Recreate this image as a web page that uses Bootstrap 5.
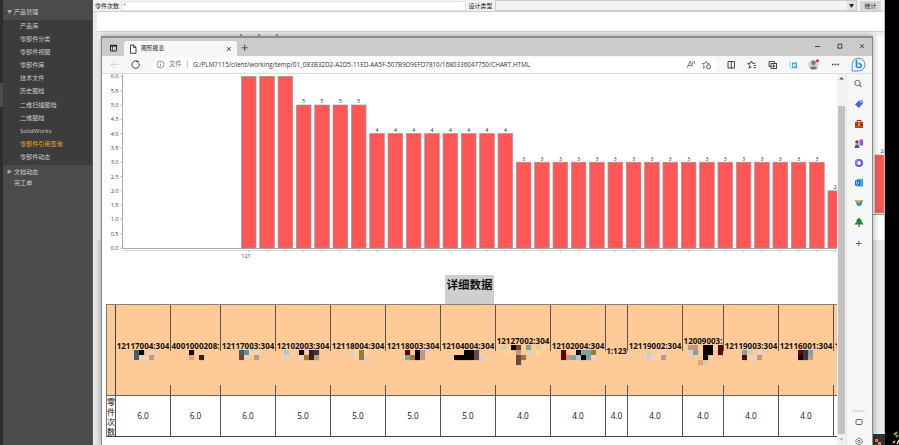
<!DOCTYPE html>
<html>
<head>
<meta charset="utf-8">
<title>图形报表</title>
<link href="https://cdn.jsdelivr.net/npm/bootstrap@5.3.0/dist/css/bootstrap.min.css" rel="stylesheet">
<style>
html,body{width:899px;height:445px;overflow:hidden}
body{font-family:"Open Sans","Noto Sans CJK SC",sans-serif;font-size:6.5px;line-height:1;background:#000;color:#333}
.desktop{width:899px;height:445px}
.rail{width:3px;background:#2d2d2d;padding-top:83px}
.rail-tab{height:24px;background:#4d4d4d}
.side{width:90px;background:#4b4b4b;color:#c8c8c8;border-right:1px solid #555;font-size:6.1px}
.side-head{height:19.5px;padding:4px 0 0 4px}
.side-sub{background:#3c3c3c;height:145.5px}
.side-item{height:13.1px;padding-left:17px}
.side-item.on{color:#e9a227}
.side-item.top-item{padding-left:4px}
.side-item.low-item{padding:0 0 3px 4px}
.tri{width:7px;color:#aaa;font-size:5px}
.app{width:792px;background:#ebebeb}
.tools{height:12px;background:#f2f2f2;border-bottom:1px solid #ccc;color:#222;font-size:6px}
.t-lab{width:28px;padding-left:2px}
.t-in{width:345px;height:10px;padding-left:1px;background:#fff;border:1px solid #e2e2e2;color:#b87a2d}
.t-typ{width:29px}
.t-sel{width:362px;height:11px;background:#f3f3f3;border:1px solid #ccc}
.t-arr{width:9px;background:#e2e2e2;font-size:5px}
.t-btn{width:21px;height:10px;background:#d8d8d8}
.pane{height:228px;margin-left:4px;background:linear-gradient(#fff 0 19px,#d5d5d5 19px 20px,#f1f1f1 20px 24px,#fff 24px)}
.win{left:101px;top:36px;width:772px;height:409px;background:#f7f7f7;border:solid #8b8b8b;border-width:2px 1px 0 1px;box-shadow:0 0 7px rgba(0,0,0,.4);overflow:hidden}
.tabs{height:18px;background:#cbcbcb}
.tab1{width:113px;height:15px;background:#f7f7f7;margin-top:3px;border-radius:3px 3px 0 0;font-size:5.8px;color:#222}
.ctl{margin-right:3px}
.addr{height:18px;border-bottom:1px solid #dedede}
.pill{width:567px;height:15px;border-radius:8px;background:#fff;font-size:6.35px;color:#333;margin-left:9px}
.bar-s{width:11px;text-align:center}
.page{width:735px;background:#fff;overflow:hidden}
.bar-v{width:9px;background:#f1f1f1}
.thumb{width:7px;height:328px;background:#c2c2c2}
.edge{width:26px;border-left:1px solid #e7e7e7}
.ttl{width:49px;height:29px;background:#cfcfcf;color:#111;font-weight:700;font-size:11.5px;margin-left:343px;padding:4px 0 0 1.5px;white-space:nowrap}
.grid-t{margin-left:4px;width:760px;color:#111;border-top:1px solid #8d8075;border-left:1px solid #777}
.hcell{height:91px;flex:none;border-bottom:1px solid #6e6258;font-weight:700;font-size:8px;
 background:linear-gradient(#5c544d 0 46px,transparent 46px 80px,#5c544d 80px) right/1px 100% no-repeat #feca98;white-space:nowrap}
.hcell.first{background:linear-gradient(#444,#444) right/1px 100% no-repeat #feca98}
.hname{margin-left:-1px}
.vcell{height:41px;flex:none;border-right:1px solid #555;border-bottom:1px solid #444;font-size:8.2px;background:#fff}
.vcell.first{font-size:8.2px;line-height:10px;font-family:"Noto Sans CJK SC",sans-serif}
.vcell.first span{height:10px}
svg{display:block;flex:none}
.spark{left:872px;top:0}
.back-labels{left:238px;top:34px}
</style>
<script src="https://cdn.jsdelivr.net/npm/bootstrap@5.3.0/dist/js/bootstrap.bundle.min.js"></script>
</head>
<body>
<div class="desktop d-flex position-relative overflow-hidden">
  <div class="rail flex-shrink-0"><div class="rail-tab"></div></div>
  <nav class="side flex-shrink-0">
    <div class="side-head d-flex align-items-center"><span class="tri">▼</span>产品管理</div>
    <div class="side-sub">
      <div class="side-item d-flex align-items-center">产品库</div>
      <div class="side-item d-flex align-items-center">零部件分类</div>
      <div class="side-item d-flex align-items-center">零部件视图</div>
      <div class="side-item d-flex align-items-center">零部件库</div>
      <div class="side-item d-flex align-items-center">技术文件</div>
      <div class="side-item d-flex align-items-center">历史图档</div>
      <div class="side-item d-flex align-items-center">二维扫描图档</div>
      <div class="side-item d-flex align-items-center">二维图档</div>
      <div class="side-item d-flex align-items-center">SolidWorks</div>
      <div class="side-item on d-flex align-items-center">零部件引用查询</div>
      <div class="side-item d-flex align-items-center">零部件动态</div>
    </div>
    <div class="side-item top-item d-flex align-items-center"><span class="tri">▶</span>文档动态</div>
    <div class="side-item low-item d-flex align-items-center"><span class="tri"></span>完工单</div>
  </nav>
  <main class="app flex-shrink-0">
    <div class="tools d-flex align-items-center">
      <span class="t-lab text-nowrap flex-shrink-0">零件次数</span>
      <div class="t-in">*</div>
      <span class="t-typ text-nowrap text-center flex-shrink-0">设计类型</span>
      <div class="t-sel d-flex justify-content-end"><span class="t-arr d-flex align-items-center justify-content-center">▼</span></div>
      <div class="t-btn ms-auto me-1 d-flex align-items-center justify-content-center">统计</div>
    </div>
    <div class="pane"></div>
  </main>
  <svg class="position-absolute spark" width="27" height="445">
    <rect x="3" y="155" width="9" height="58" fill="#ff5555" stroke="#999" stroke-width=".6"/>
    <text x="8.5" y="153" font-size="6" fill="#333">2</text>
    <path d="M0 214.5H12" stroke="#999"/>
    <rect x="12" width="1" height="434" fill="#bbb"/><rect x="13" width="14" height="445" fill="#000"/>
    <rect y="434" width="13" height="11" fill="#333"/>
    <path d="M3 439h3v3h-3zM6 442h3v3h-3z" fill="#ee7b5d"/>
    <path d="M22 435l3-3M24 437l2-2" stroke="#8cab32" stroke-width="2"/><path d="M21 443l2-2M25 444l2-4" stroke="#d9d9b0" stroke-width="1.5"/>
  </svg>
  <svg class="position-absolute back-labels" width="42" height="2"><path d="M2 1h2M20 1h2M38 1h2" stroke="#444"/></svg>

  <section class="win position-absolute d-flex flex-column">
    <div class="tabs d-flex flex-shrink-0">
      <svg width="22" height="18" fill="none" stroke="#222" stroke-width="1"><rect x="8.500" y="7.500" width="6" height="5.500" rx=".5"/><path d="M8 7.700h7" stroke-width="1.700"/><path d="M10.500 8v5" stroke-width=".7"/></svg>
      <div class="tab1 d-flex align-items-center">
        <svg width="17" height="12" fill="none" stroke="#333" stroke-width=".9"><path d="M6.500 2h3.200l2.300 2.300v6h-5.500zM9.600 2v2.500h2.400"/></svg>图形报表
        <svg class="ms-auto me-1" width="8" height="8" stroke="#333" stroke-width=".9"><path d="M1.800 2l4 4M5.800 2l-4 4"/></svg>
      </div>
      <svg width="14" height="18" stroke="#444" stroke-width=".9"><path d="M4.500 9.800h6.400M7.700 6.600v6.400"/></svg>
      <svg class="ctl ms-auto" width="66" height="18" fill="none" stroke="#333" stroke-width=".9"><path d="M12 8.500h5M35 6.200v4h3.800v-4.200zM57 6.200l4 4M61 6.200l-4 4"/></svg>
    </div>
    <div class="addr d-flex align-items-center flex-shrink-0">
      <svg width="40" height="17" fill="none"><path d="M9 8.500h8M12.500 5l-3.500 3.500 3.500 3.500" stroke="#cfcfcf" stroke-width=".9"/><path d="M35.300 5.300a3.700 3.700 0 1 0 1.900 2.200M33.800 5.200h2.600M36 5v2.200" stroke="#333" stroke-width=".9"/></svg>
      <div class="pill d-flex align-items-center">
        <svg width="18" height="15" fill="none" stroke="#666" stroke-width=".7"><circle cx="9.500" cy="7.500" r="3.500"/><path d="M9.500 7v2.400M9.500 5.300v.8"/></svg>
        <span class="text-secondary">文件</span><span class="text-secondary bar-s">|</span>
        <svg width="342" height="15"><text x="0" y="9.800" font-size="6.500" fill="#333" textLength="337" lengthAdjust="spacingAndGlyphs">G:/PLM7115/client/working/temp/01_083B32D2-A2D5-11ED-AA5F-507B9D9EFD7810/1680336047750/CHART.HTML</text></svg>
        <svg class="ms-auto me-1" width="34" height="15" fill="none" stroke="#666" stroke-width=".8"><path d="M7 11l3-7 2.500 6M8 8.500h3.500M12 4q1.500 1.500 .5 3.500M14 4q1 1.500 .3 3"/><path d="M26 4l-1.200 2.500h-2.800l2 2-.6 2.800 2-1.300M26 4l1.200 2.500h2.500"/><circle cx="28.500" cy="9.700" r="2" stroke="#333"/></svg>
      </div>
      <svg width="154" height="18" fill="none" stroke="#333" stroke-width=".9"><path d="M10 5.500h6.500v6.500h-6.500zM13.250 5v7.500"/><path d="M33.500 5l-1.200 2.400h-2.600l1.900 2-.5 2.700 2.400-1.300M33.500 5l1.200 2.400h2.600M35.500 9.500h2.500M35.500 11.700h2.500"/><path d="M53 10.500h-2v-5h5.500v2"/><rect x="53" y="7.500" width="5.500" height="5"/><path d="M55.700 8.300v3.400M54 10h3.400"/><path d="M72.200 5v7h7" stroke="#98cfe8"/><rect x="74" y="6.500" width="5" height="5.500" fill="#20b5e5" stroke="none"/><path d="M75 9.400h2.800a1.400 1.400 0 1 0-.7 1.300" stroke="#fff" stroke-width=".8"/><circle cx="95.500" cy="8.700" r="5.200" fill="#d6d1ce" stroke="none"/><circle cx="95.500" cy="6.700" r="2.200" fill="#777" stroke="none"/><path d="M91.800 12a4 3 0 0 1 7.400 0q-3.700 3-7.400 0" fill="#777" stroke="none"/><circle cx="99.500" cy="4.800" r="1.500" fill="#e22" stroke="none"/><path d="M114 8.500h1.500M116.700 8.500h1.500M119.400 8.500h1.500" stroke-width="1.300"/>
      <g transform="translate(140.500 8.500)"><path d="M-6.300 6.500V-.2A6.400 6.400 0 1 1 0 6.500z" fill="#f4f9ff" stroke="#3e83d8" stroke-width=".9"/><path d="M-2-4.800v7.600" stroke="#1689e4" stroke-width="1.700"/><path d="M-2 2.600q4.800 1.500 4.800-1.400q0-1.600-3-2.400" stroke="#1689e4" stroke-width="1.500"/></g></svg>
    </div>
    <div class="d-flex flex-grow-1">
      <div class="page flex-shrink-0">
        <svg id="chart" width="735" height="201" viewBox="102 74 735 201" font-size="5.600" fill="#444"></svg>
        <div class="ttl">详细数据</div>
        <div class="grid-t"><div class="d-flex" id="heads"></div><div class="d-flex" id="vals"></div></div>
      </div>
      <div class="bar-v flex-shrink-0"><svg width="9" height="32"><path d="M2 5.500l2.500-2.500 2.500 2.500z" fill="#555"/></svg><div class="thumb mx-auto"></div><svg width="9" height="11"><path d="M2.500 4.500l2 2 2-2z" fill="#999"/></svg></div>
      <div class="edge">
        <svg width="25" height="371" viewBox="847 74 25 371" fill="none">
          <circle cx="857.500" cy="83" r="2.700" stroke="#52677f"/><path d="M859.500 85l2 2" stroke="#b645c5" stroke-width="1.500"/>
          <path d="M855 104.500l3.500-3.500 4-1 .3 3.500-4 4.500z" fill="#4965ee"/><circle cx="861" cy="101.700" r=".8" fill="#fff"/>
          <path d="M855 122h8v6h-8z" fill="#bd4720"/><path d="M857 122v-1.500h4v1.500" stroke="#993414"/><path d="M855 124.500h8" stroke="#7d2b10"/><path d="M858 123.500h2v2h-2z" fill="#f6b060"/>
          <circle cx="857" cy="142" r="1.800" fill="#555"/><path d="M854.500 148l1-3.500h3l1 3.500z" fill="#555"/><path d="M859.500 139.500h3.500v6h-3.500z" fill="#b44be0"/>
          <circle cx="859" cy="163" r="3" stroke="#5b63d8" stroke-width="2.200"/><path d="M856.500 164.500a3 3 0 0 1 2-4.500" stroke="#b66be0" stroke-width="2"/>
          <rect x="857" y="179" width="6" height="7.500" fill="#35a9e8"/><rect x="855" y="180.500" width="5" height="5" fill="#0b63bd"/><circle cx="857.500" cy="183" r="1.300" stroke="#fff" stroke-width=".7"/>
          <path d="M855 200h8l-1.500 5h-4.500z" fill="#2b93d5"/><path d="M855 200l8 0-5 3z" fill="#e9b53a"/><path d="M857 205.500h4" stroke="#5ab35a"/>
          <path d="M859 217.500l3 3.500h-1l2.600 3.500h-9.200l2.600-3.500h-1z" fill="#188b38"/><path d="M859 224v3" stroke="#9b5527" stroke-width="1.300"/>
          <path d="M856 243.500h5.600M858.800 240.700v5.600" stroke="#555" stroke-width=".9"/>
          <path d="M852 411h13" stroke="#ccc"/><rect x="856" y="419.500" width="6" height="5" rx=".7" stroke="#555" stroke-width=".9"/>
          <circle cx="859" cy="441.500" r="3.200" stroke="#555" stroke-dasharray="1.700 .6"/><circle cx="859" cy="441.500" r="1.200" stroke="#555" stroke-width=".8"/>
        </svg>
      </div>
    </div>
  </section>
</div>
<script>
// Bar chart: counts in descending order
const counts=[6,6,6,5,5,5,5,...Array(8).fill(4),...Array(17).fill(3),2];
const base=248, unit=28.6;
let s='';
for(let v=0;v<=12;v++){const y=base-v*unit/2;
  s+=`<text x="118.500" y="${y+2}" text-anchor="end">${(v/2).toFixed(1)}</text><path d="M120 ${y}h2" stroke="#aaa" stroke-width=".6"/>`;}
s+='<path d="M122.500 74V248M122 248.500H837" stroke="#aaa" fill="none"/><path d="M123 250.500H837" stroke="#ccc" stroke-width=".8"/>';
counts.forEach((c,i)=>{const x=241.400+i*18.330,y=base-c*unit;
  s+=`<rect x="${x}" y="${y}" width="14.600" height="${c*unit}" fill="#ff5656" stroke="#999" stroke-width=".7"/>`;
  if(c<6)s+=`<text x="${x+7.300}" y="${y-1.700}" font-size="5" fill="#222" text-anchor="middle">${c}</text>`;
  s+=`<path d="M${x+7.300} 250v2" stroke="#aaa" stroke-width=".7"/>`;});
s+='<text x="246" y="258" text-anchor="middle">121</text>';
document.getElementById('chart').innerHTML=s;

// Detail table: width, part number, count, mosaic rows ('.' is blank), mosaic left offset
const P={g:'#3f6263',k:'#090306',w:'#ead2c5',b:'#c19886',p:'#e2a273',n:'#33201f',s:'#6c8b96',r:'#794134',l:'#a9c7d6',t:'#a3763e',y:'#fbd59b',m:'#5d0506',d:'#393742',a:'#84a29d',c:'#d6d1c9',e:'#d8cda4',o:'#b06c2b',v:'#67494d'};
const cols=[
 [55,'12117004:304','6.0',['gk.w','gwwb'],18],
 [50,'4001000208:','6.0',['k..','p.n'],18],
 [55,'12117003:304','6.0',['gsyw','rw.b'],18],
 [55,'12102003:304','5.0',['l..k.nd','c..wtnb'],8],
 [55,'12118004:304','5.0',['cyty','.wtc'],18],
 [55,'12118003:304','5.0',['m.kb','atkb'],19],
 [55,'12104004:304','5.0',['y.kkv.','kkkkvc'],13],
 [55,'12127002:304','4.0',['e.kr.a.ey','.y.b.c.y.','...vo....','...v.....'],5],
 [55,'12102004:304','4.0',['m.ykaat','mbalkaw'],10],
 [22,'1:123','4.0',[],0],
 [55,'12119002:304','4.0',['e.yw','cwyb'],18],
 [41,'12009003:','4.0',['bb.kkym','ca.kk.m','...k...','..pe...'],5],
 [55,'12119003:304','4.0',['ae.w','mwwb'],18],
 [55,'12116001:304','4.0',['mda','kdb'],19],
 [55,'12116002:304','',[],18]];
let h='<div class="hcell first" style="width:9px"></div>';
let v='<div class="vcell first d-flex flex-column align-items-center" style="width:9px"><span>零</span><span>件</span><span>次</span><span>数</span></div>';
cols.forEach(([w,name,n,rows,off])=>{
  const top=rows.length>2?32:(w<30?42:37);
  let m='';rows.forEach((r,j)=>[...r].forEach((c,i)=>{if(c!=='.')m+=`<rect x="${off+i*5}" y="${j*5}" width="5.100" height="5.100" fill="${P[c]}"/>`;}));
  h+=`<div class="hcell" style="width:${w}px;padding-top:${top}px"><div class="hname text-center">${name}</div><svg width="${w-1}" height="22">${m}</svg></div>`;
  v+=`<div class="vcell d-flex align-items-center justify-content-center" style="width:${w}px">${n}</div>`;
});
document.getElementById('heads').innerHTML=h;
document.getElementById('vals').innerHTML=v;
</script>
</body>
</html>
